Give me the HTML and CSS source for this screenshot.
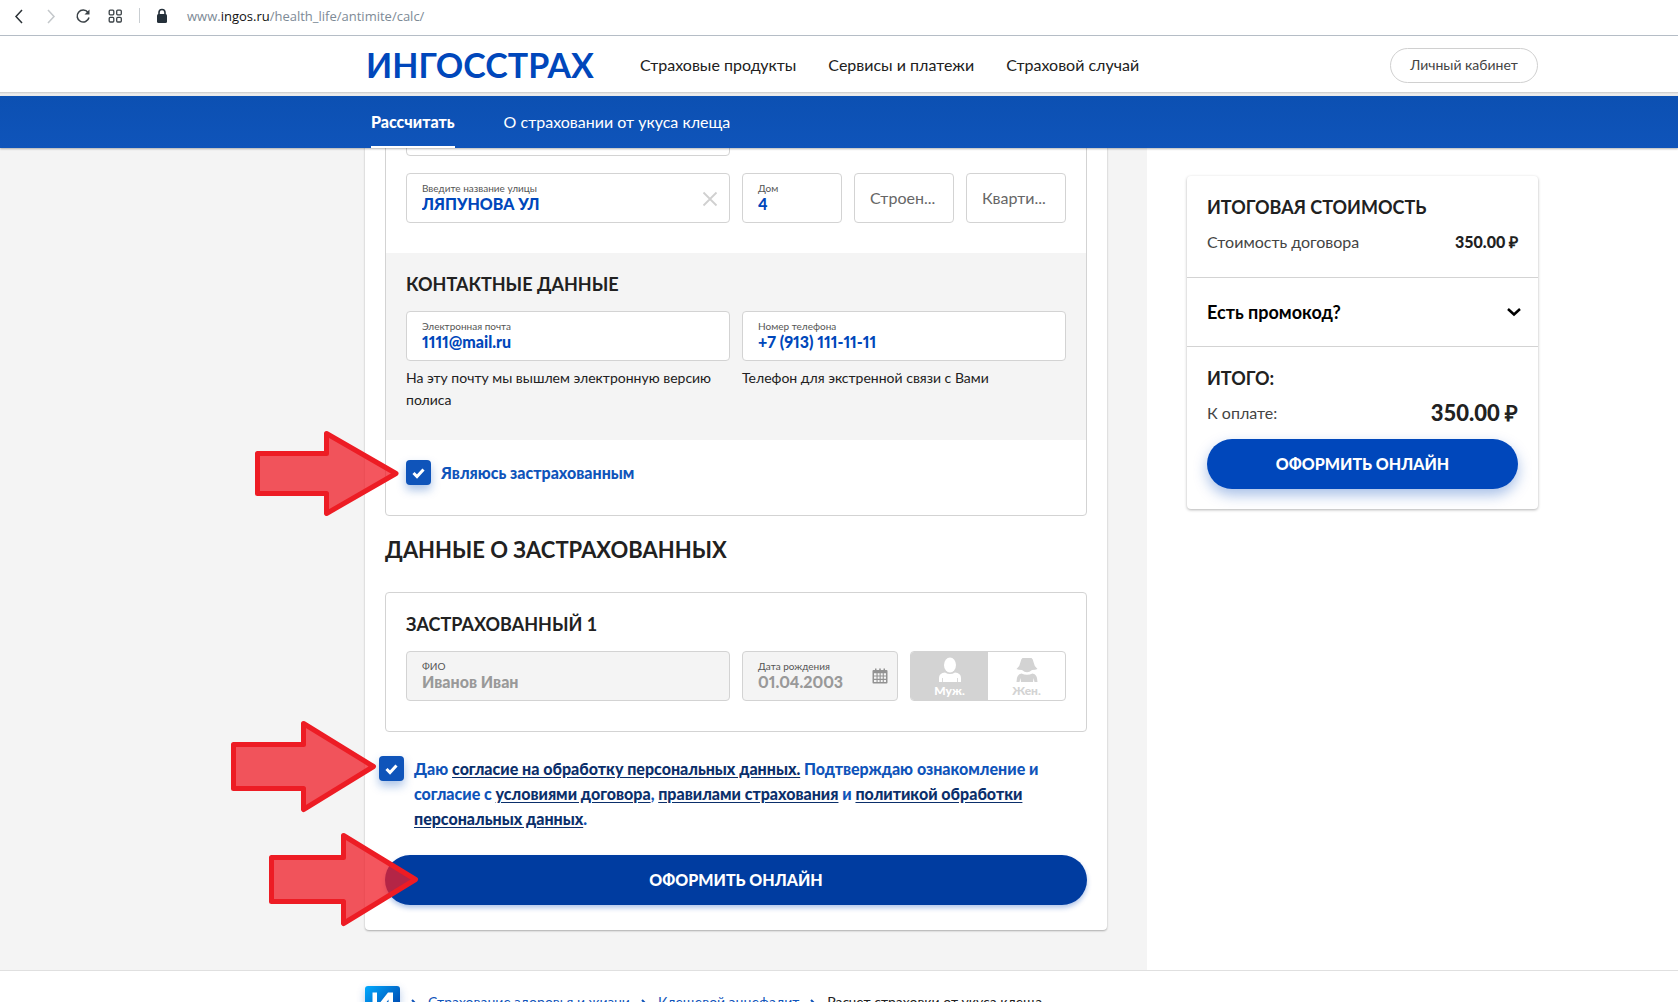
FILE: index.html
```html
<!DOCTYPE html>
<html lang="ru">
<head>
<meta charset="utf-8">
<meta name="viewport" content="width=device-width, initial-scale=1">
<title>Расчет страховки от укуса клеща</title>
<link rel="stylesheet" href="styles.css">
</head>
<body>
<div class="browser">
  <button class="browser-btn" aria-label="Назад"><svg width="16" height="18" viewBox="0 0 16 18"><path d="M11 3 5 9.500l6 6.500" fill="none" stroke="#2b3237" stroke-width="1.500"/></svg></button>
  <button class="browser-btn" aria-label="Вперёд"><svg width="16" height="18" viewBox="0 0 16 18"><path d="m5 3 6 6.500L5 16" fill="none" stroke="#c4c8cb" stroke-width="1.500"/></svg></button>
  <button class="browser-btn" aria-label="Обновить"><svg width="16" height="18" viewBox="0 0 16 18"><path d="M13 5.500A6 6 0 1 0 14 10.500" fill="none" stroke="#3a4146" stroke-width="1.500"/><path d="M14.500 2.500v5h-5z" fill="#3a4146"/></svg></button>
  <button class="browser-btn" aria-label="Экспресс-панель"><svg width="16" height="18" viewBox="0 0 16 18" fill="none" stroke="#3a4146" stroke-width="1.300"><rect x="2.200" y="3.200" width="4.600" height="4.600" rx="1"/><rect x="9.700" y="3.200" width="4.600" height="4.600" rx="1"/><rect x="2.200" y="10.400" width="4.600" height="4.600" rx="1"/><rect x="9.700" y="10.400" width="4.600" height="4.600" rx="1"/></svg></button>
  <span class="browser-sep"></span>
  <svg class="lock" width="12" height="16" viewBox="0 0 12 16"><path d="M3 7V4.500a3 3 0 0 1 6 0V7" fill="none" stroke="#25303a" stroke-width="1.600"/><rect x="1" y="6" width="10" height="9" rx="1.500" fill="#25303a"/></svg>
  <span class="url">www.<b>ingos.ru</b>/health_life/antimite/calc/</span>
</div>

<header class="header">
  <a class="brand" href="#">ИНГОССТРАХ</a>
  <nav class="nav">
    <a href="#">Страховые продукты</a>
    <a href="#">Сервисы и платежи</a>
    <a href="#">Страховой случай</a>
  </nav>
  <button class="account">Личный кабинет</button>
</header>

<nav class="tabs">
  <a class="tab tab-active" href="#">Рассчитать</a>
  <a class="tab" href="#">О страховании от укуса клеща</a>
</nav>

<main class="layout">
  <div class="content">
    <form class="form-card">
      <section class="panel">
        <div class="panel-part address">
          <div class="pair">
            <div class="field"><input type="text" aria-label="Населённый пункт"></div>
          </div>
          <div class="pair">
            <div class="field field-icon">
              <div class="field-body"><label for="street">Введите название улицы</label><input id="street" type="text" value="ЛЯПУНОВА УЛ"></div>
              <button type="button" class="clear" aria-label="Очистить"><svg width="16" height="16" viewBox="0 0 16 16"><path d="m1.500 1.500 13 13m0-13-13 13" stroke="#d0d0d0" stroke-width="1.800"/></svg></button>
            </div>
            <div class="triple">
              <div class="field"><label for="house">Дом</label><input id="house" type="text" value="4"></div>
              <div class="field field-empty"><input type="text" placeholder="Строен..." aria-label="Строение"></div>
              <div class="field field-empty"><input type="text" placeholder="Кварти..." aria-label="Квартира"></div>
            </div>
          </div>
        </div>
        <div class="panel-part contacts">
          <h3>КОНТАКТНЫЕ ДАННЫЕ</h3>
          <div class="pair">
            <div>
              <div class="field"><label for="email">Электронная почта</label><input id="email" type="email" value="1111@mail.ru"></div>
              <p class="hint">На эту почту мы вышлем электронную версию полиса</p>
            </div>
            <div>
              <div class="field"><label for="phone">Номер телефона</label><input id="phone" type="tel" value="+7 (913) 111-11-11"></div>
              <p class="hint">Телефон для экстренной связи с Вами</p>
            </div>
          </div>
        </div>
        <div class="panel-part">
          <label class="check"><input type="checkbox" checked><span>Являюсь застрахованным</span></label>
        </div>
      </section>

      <h2>ДАННЫЕ О ЗАСТРАХОВАННЫХ</h2>

      <section class="panel panel-part">
        <h3>ЗАСТРАХОВАННЫЙ 1</h3>
        <div class="pair">
          <div class="field field-disabled"><label for="name">ФИО</label><input id="name" type="text" value="Иванов Иван" disabled></div>
          <div class="double">
            <div class="field field-icon field-disabled">
              <div class="field-body"><label for="birth">Дата рождения</label><input id="birth" type="text" value="01.04.2003" disabled></div>
              <svg class="calendar" width="16" height="16" viewBox="0 0 16 16"><path fill="#929292" fill-rule="evenodd" d="M1.500 2H3V.500h1.500V2h2.700V.500h1.600V2h2.700V.500H13V2h1.500q1 0 1 1v11.500q0 1-1 1h-13q-1 0-1-1V3q0-1 1-1zM2 5.200v2.300h2.500V5.200zm3.600 0v2.300h2V5.200zm3.100 0v2.300h2V5.200zm3.100 0v2.300H14V5.200zM2 8.600v2.200h2.500V8.600zm3.600 0v2.200h2V8.600zm3.100 0v2.200h2V8.600zm3.100 0v2.200H14V8.600zM2 12v2h2.500v-2zm3.600 0v2h2v-2zm3.100 0v2h2v-2zm3.100 0v2H14v-2z"/></svg>
            </div>
            <div class="gender">
              <label class="gender-item"><input type="radio" name="gender" checked disabled>
                <svg width="24" height="26" viewBox="0 0 24 26" fill="currentColor"><ellipse cx="12" cy="8" rx="6" ry="7.500"/><path d="M1 25v-4q0-5 6-5.500 5 3 10 0 6 .5 6 5.500v4h-3v-4h-.800v4H4.800v-4H4v4z"/></svg>
                <span>Муж.</span></label>
              <label class="gender-item"><input type="radio" name="gender" disabled>
                <svg width="24" height="26" viewBox="0 0 24 26" fill="currentColor"><path d="M7.500 1h9q1.500 1 2 4 .5 4 4 7-2 1-5.500 1-5 4.500-10 0-3.500 0-5.500-1 3.500-3 4-7 .5-3 2-4z"/><path d="M1.500 25q0-8 5-8.500 5.500 2.500 11 0 5 .5 5 8.500h-3l-1-4-.5 4H6l-.5-4-1 4z"/></svg>
                <span>Жен.</span></label>
            </div>
          </div>
        </div>
      </section>

      <div class="check consent">
        <input type="checkbox" id="consent" checked>
        <label for="consent">Даю <a href="#">согласие на обработку персональных данных.</a> Подтверждаю ознакомление и согласие с <a href="#">условиями договора</a>, <a href="#">правилами страхования</a> и <a href="#">политикой обработки персональных данных</a>.</label>
      </div>
      <button type="submit" class="submit submit-pressed">ОФОРМИТЬ ОНЛАЙН</button>
    </form>
  </div>

  <aside class="aside">
    <div class="summary">
      <section class="summary-part">
        <h3>ИТОГОВАЯ СТОИМОСТЬ</h3>
        <div class="row"><span>Стоимость договора</span><strong>350.00 ₽</strong></div>
      </section>
      <button class="promo"><span>Есть промокод?</span><svg width="16" height="10" viewBox="0 0 16 10"><path d="m2 2 6 5.500L14 2" fill="none" stroke="#000" stroke-width="2.500"/></svg></button>
      <section class="summary-part summary-total">
        <h3>ИТОГО:</h3>
        <div class="row"><span>К оплате:</span><strong class="total">350.00 ₽</strong></div>
        <button class="submit">ОФОРМИТЬ ОНЛАЙН</button>
      </section>
    </div>
  </aside>
</main>

<footer class="footer">
  <a class="home" href="#" aria-label="Главная"><svg width="35" height="35" viewBox="0 0 35 35"><defs><linearGradient id="g" x1="0" y1="0" x2="1" y2="1"><stop offset="0" stop-color="#0af"/><stop offset=".7" stop-color="#0053b8"/></linearGradient></defs><rect width="35" height="35" rx="3" fill="url(#g)"/><path fill="#fff" d="M7.500 6.500h4.500v14L23 6.500h5V28h-4.500V13.500L12.500 28h-5z"/></svg></a>
  <svg class="sep" width="6" height="10" viewBox="0 0 6 10"><path d="m1 1 4 4-4 4" fill="none" stroke="#0f53b9" stroke-width="2"/></svg>
  <a class="crumb" href="#">Страхование здоровья и жизни</a>
  <svg class="sep" width="6" height="10" viewBox="0 0 6 10"><path d="m1 1 4 4-4 4" fill="none" stroke="#0f53b9" stroke-width="2"/></svg>
  <a class="crumb" href="#">Клещевой энцефалит</a>
  <svg class="sep" width="6" height="10" viewBox="0 0 6 10"><path d="m1 1 4 4-4 4" fill="none" stroke="#0f53b9" stroke-width="2"/></svg>
  <span class="crumb">Расчет страховки от укуса клеща</span>
</footer>

<svg class="arrows" aria-hidden="true">
  <path d="M257.500 453.500h69v-20l69.500 40-69.500 40v-20h-69z"/>
  <path d="M233.500 744.500h70v-21l70 43-70 43v-21h-70z"/>
  <path d="M271.500 857.500h72v-22l72 44-72 44v-22h-72z"/>
</svg>
</body>
</html>
```
FILE: styles.css
```css
* {
  box-sizing: border-box;
}

html {
  height: 100%;
}

body {
  position: relative;
  display: flex;
  flex-direction: column;
  height: 100%;
  margin: 0;
  overflow: hidden;
  background: #fff;
  color: #212121;
  font: 16px/24px Lato, "Liberation Sans", sans-serif;
}

body > * {
  flex-shrink: 0;
}

button,
input {
  margin: 0;
  padding: 0;
  border: 0;
  background: none;
  color: inherit;
  font: inherit;
}

h2,
h3,
p {
  margin: 0;
}

a {
  color: inherit;
  text-decoration: none;
}

/* Browser bar */
.browser {
  position: relative;
  z-index: 2;
  display: flex;
  align-items: center;
  gap: 16px;
  height: 36px;
  padding: 0 12px 4px 11px;
  border-bottom: 1px solid #b5bdc6;
  background: #fff;
}

.browser-btn {
  display: flex;
}

.browser-sep {
  width: 1px;
  height: 15px;
  background: #c9ced2;
}

.url {
  margin-left: 3px;
  color: #7d8a96;
  font: 13px/20px "Open Sans", "Noto Sans", sans-serif;
}

.url b {
  color: #111;
  font-weight: 400;
}

/* Site header */
.header {
  position: relative;
  z-index: 2;
  display: flex;
  align-items: center;
  height: 60px;
  padding: 0 140px 2px 366px;
  background: linear-gradient(#fff 56px, #c9c9c9 56px, #ececec 58px, #eee);
}

.brand {
  margin-right: 46px;
  color: #0047bb;
  font-size: 34px;
  font-weight: 700;
  line-height: 40px;
}

.nav {
  display: flex;
  flex: 1;
  gap: 32px;
}

.account {
  width: 148px;
  height: 35px;
  border: 1px solid #d0d0d0;
  border-radius: 18px;
  color: #444;
  font-size: 14px;
}

/* Product tabs */
.tabs {
  position: relative;
  z-index: 2;
  display: flex;
  gap: 49px;
  height: 52px;
  padding: 0 371px;
  background: linear-gradient(#0c50b2, #0f54ba);
  box-shadow: 0 1px 2px rgba(0, 0, 0, .3);
  color: #fff;
}

.tab {
  padding-top: 14px;
}

.tab-active {
  border-bottom: 2px solid #fff;
  font-weight: 900;
}

/* Two-column page */
.layout {
  display: grid;
  grid-template-columns: minmax(0, 1147fr) minmax(0, 531fr);
}

.content {
  padding: 0 40px 40px 365px;
  background: #f4f4f4;
}

.form-card {
  margin-top: -64px;
  padding: 20px 20px 25px;
  border-radius: 4px;
  background: #fff;
  box-shadow: 0 1px 2px rgba(0, 0, 0, .3);
}

.panel {
  border: 1px solid #d3d3d3;
  border-radius: 4px;
}

.panel-part {
  padding: 20px 20px 30px;
}

.address {
  display: grid;
  gap: 17px;
  padding-top: 1px;
}

.contacts {
  padding-bottom: 29px;
  background: #f4f4f4;
}

.pair,
.double {
  display: grid;
  grid-template-columns: repeat(2, minmax(0, 1fr));
  gap: 12px;
}

.triple {
  display: grid;
  grid-template-columns: repeat(3, minmax(0, 1fr));
  gap: 12px;
}

h2 {
  margin: 20px 0 28px;
  font-size: 22px;
  line-height: 28px;
}

h3 {
  margin-bottom: 16px;
  font-size: 18px;
  line-height: 22px;
}

.field {
  height: 50px;
  padding: 9px 15px 0;
  border: 1px solid #d3d3d3;
  border-radius: 4px;
  background: #fff;
}

.field label {
  display: block;
  color: #555;
  font-size: 10px;
  line-height: 10px;
}

.field input {
  display: block;
  width: 100%;
  height: 22px;
  outline: 0;
  color: #0047bb;
  font-weight: 900;
  font-variant-numeric: proportional-nums;
}

.field-empty {
  padding-top: 13px;
}

.field-empty input {
  font-weight: 400;
}

.field-empty input::placeholder {
  color: #666;
  opacity: 1;
}

.field-disabled {
  background: #f4f4f4;
}

.field-disabled input {
  color: #999;
}

.field-icon {
  display: flex;
  padding-right: 9px;
}

.field-body {
  flex: 1;
  min-width: 0;
}

.clear {
  display: flex;
  margin: 8px 2px 0 0;
  height: 16px;
}

.calendar {
  margin-top: 7px;
}

.hint {
  margin-top: 6px;
  font-size: 14px;
  line-height: 22px;
}

/* Gender switch */
.gender {
  display: flex;
  height: 50px;
  border: 1px solid #d3d3d3;
  border-radius: 4px;
  color: #d3d3d3;
  overflow: hidden;
}

.gender-item {
  display: flex;
  flex: 1;
  flex-direction: column;
  align-items: center;
  padding-top: 5px;
  font-size: 12px;
  font-weight: 900;
  line-height: 16px;
}

.gender-item:has(input:checked) {
  background: #d3d3d3;
  color: #fff;
}

.gender-item input {
  position: absolute;
  opacity: 0;
}

/* Tick boxes */
.check {
  display: flex;
  gap: 10px;
  color: #0f54ba;
  font-weight: 900;
  line-height: 25px;
}

.check input {
  flex: none;
  width: 25px;
  height: 25px;
  border-radius: 4px;
  appearance: none;
}

.check input:checked {
  background: #0f54ba url("data:image/svg+xml,%3Csvg xmlns='http://www.w3.org/2000/svg' viewBox='0 0 25 25'%3E%3Cpath d='m7.500 13 3.500 3.500L17.500 9.500' fill='none' stroke='%23fff' stroke-width='3'/%3E%3C/svg%3E");
  box-shadow: 0 5px 10px rgba(15, 84, 186, .35);
}

.consent {
  margin: 24px 0 24px -6px;
}

.consent a {
  color: #0b2f6b;
  text-decoration: underline;
  text-underline-offset: 2px;
}

.submit {
  display: block;
  width: 100%;
  height: 50px;
  border-radius: 25px;
  background: #0047bb;
  box-shadow: 0 6px 14px rgba(0, 71, 187, .35);
  color: #fff;
  font-weight: 900;
}

.submit-pressed {
  background: #003ca0;
  box-shadow: 0 3px 5px rgba(0, 71, 187, .3);
}

/* Price summary */
.aside {
  padding: 28px 140px 28px 40px;
}

.summary {
  border-radius: 4px;
  box-shadow: 0 1px 3px rgba(0, 0, 0, .3);
}

.summary-part {
  padding: 20px 20px 23px;
}

.summary h3 {
  margin-bottom: 12px;
}

.row {
  display: flex;
  justify-content: space-between;
  color: #444;
}

.row strong {
  color: #212121;
  font-weight: 900;
}

.row .total {
  font-size: 22px;
}

.promo {
  display: flex;
  align-items: center;
  justify-content: space-between;
  width: 100%;
  height: 70px;
  padding: 0 16px 0 20px;
  border: 1px solid #d3d3d3;
  border-width: 1px 0;
  color: #000;
  font-size: 18px;
  font-weight: 700;
}

.summary-total {
  padding-bottom: 20px;
}

.summary-total .submit {
  margin-top: 14px;
}

/* Breadcrumbs */
.footer {
  position: relative;
  display: flex;
  align-items: center;
  gap: 11px;
  padding: 15px 140px 15px 365px;
  border-top: 1px solid #e0e0e0;
  background: #fff;
  font-size: 14px;
}

.footer a {
  color: #0f54ba;
}

.crumb {
  padding-bottom: 4px;
}

.home {
  display: flex;
  border-radius: 4px;
  box-shadow: 0 3px 8px rgba(15, 84, 186, .3);
}

/* Pointer arrows drawn over the page */
.arrows {
  position: absolute;
  inset: 0;
  z-index: 3;
  width: 100%;
  height: 100%;
  fill: rgba(240, 30, 40, .75);
  stroke: #ed1c24;
  stroke-width: 5;
  stroke-linejoin: round;
  pointer-events: none;
}
```
